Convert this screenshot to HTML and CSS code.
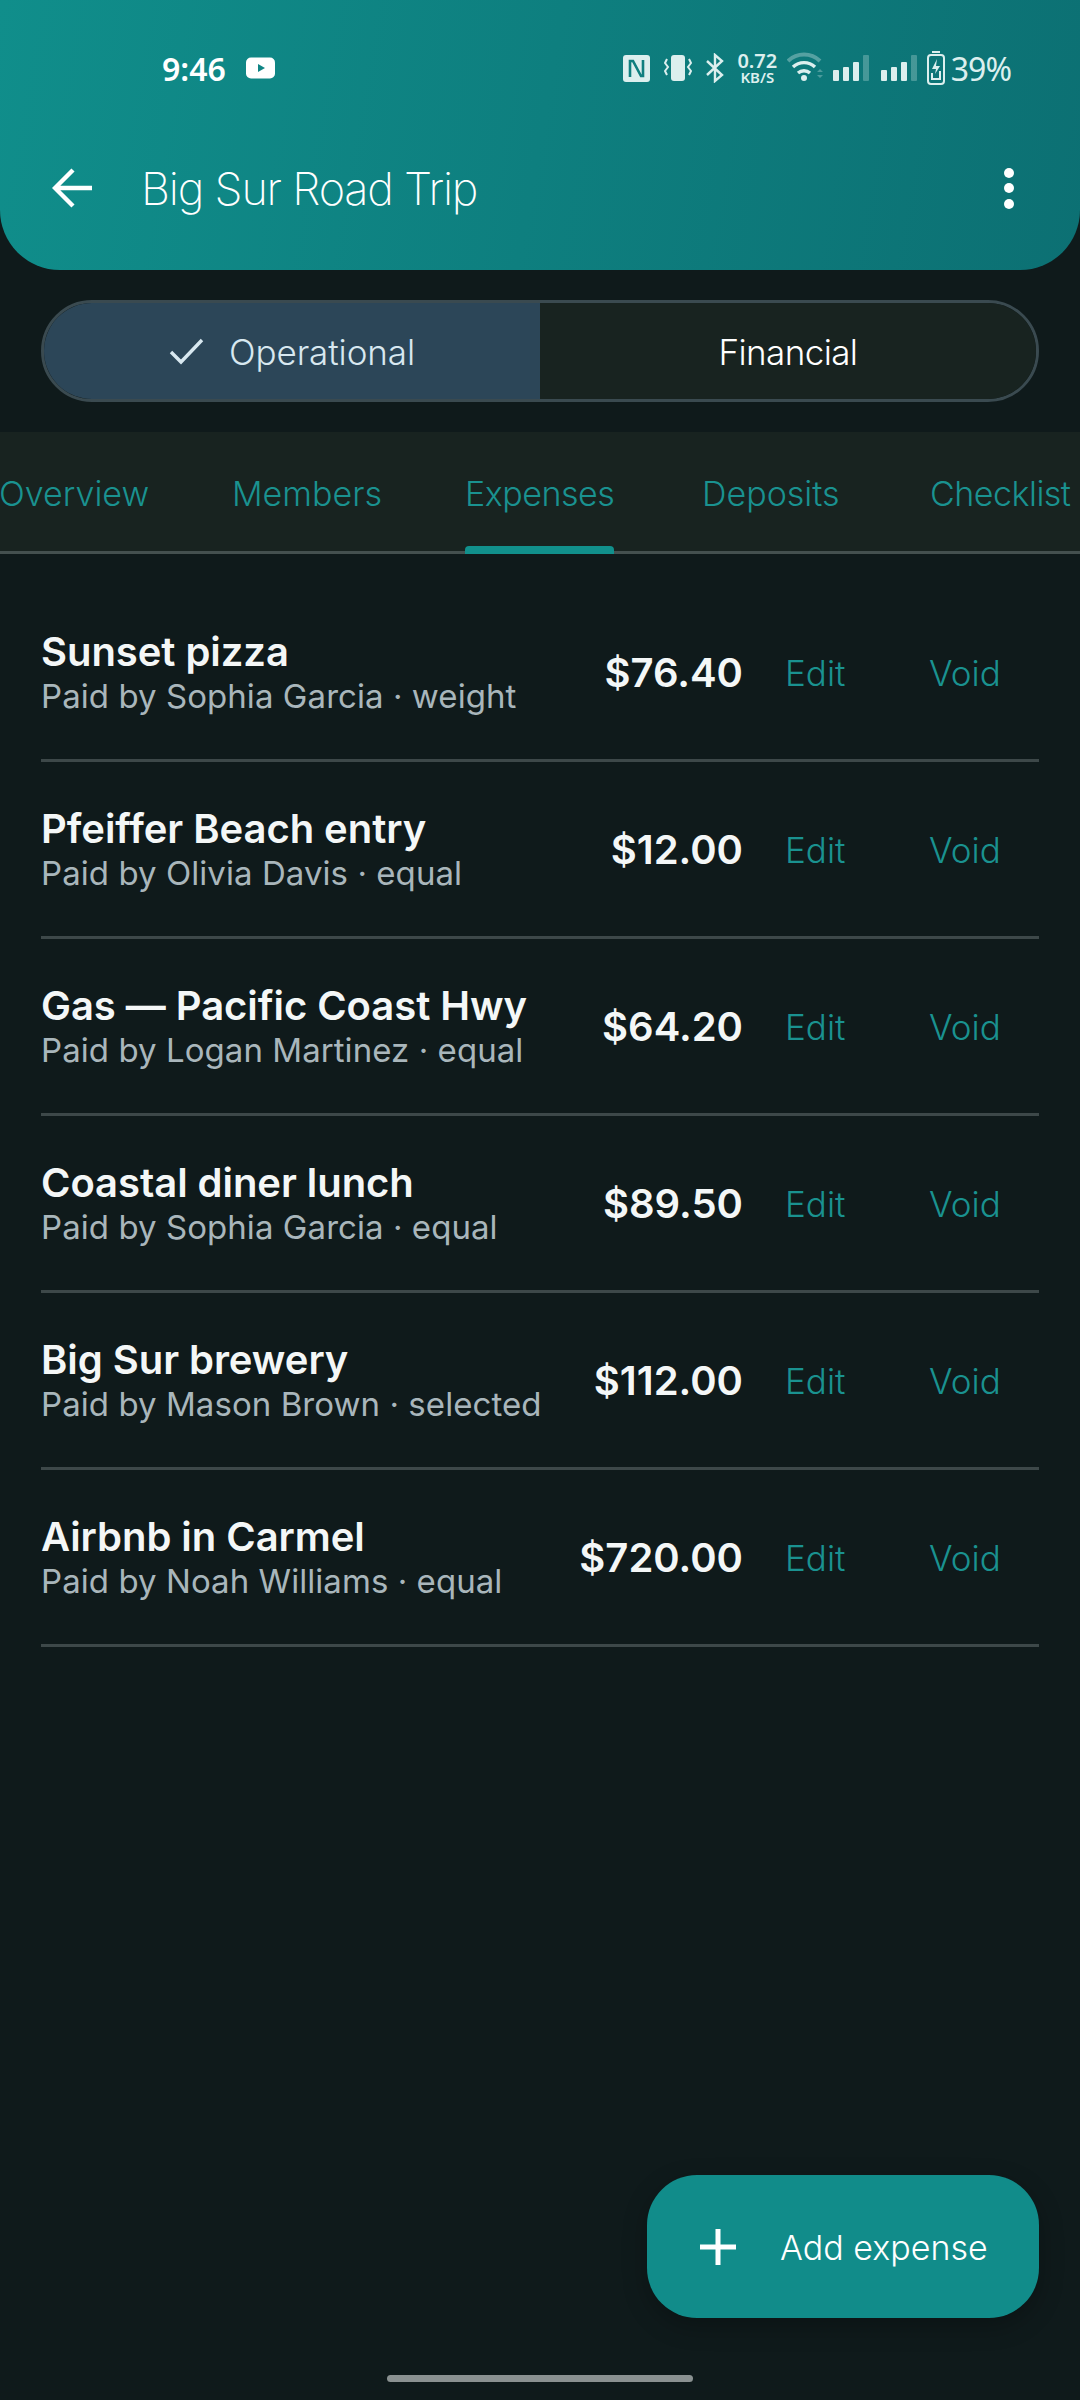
FILE: index.html
```html
<!DOCTYPE html>
<html lang="en">
<head>
    <meta charset="UTF-8">
    <meta name="viewport" content="width=device-width, initial-scale=1.0">
    <title>Big Sur Road Trip</title>
    <link rel="stylesheet" href="styles.css">
</head>
<body>
    <div class="screen">
        <header class="appbar">
            <div class="statusbar">
                <div class="status-left">
                    <span class="clock">9:46</span>
                    <svg class="yt" width="30" height="22" viewBox="0 0 30 22"><rect width="29" height="21" y="0.5" rx="5" fill="#fff"/><path d="M12 7l7 4-7 4z" fill="#0f8585"/></svg>
                </div>
                <div class="status-right">
                    <svg class="ic-nfc" width="27" height="27" viewBox="0 0 27 27"><rect width="27" height="27" rx="3" fill="#dcefee"/><path d="M7 22V6h3l8 15h2V5" fill="none" stroke="#0f7f7f" stroke-width="2.6"/></svg>
                    <svg class="ic-vib" width="28" height="28" viewBox="0 0 28 28"><rect x="7" y="1" width="14" height="26" rx="3" fill="#dcefee"/><path d="M3 5l-2 4 3 4-3 4 2 4M25 5l2 4-3 4 3 4-2 4" fill="none" stroke="#dcefee" stroke-width="2"/></svg>
                    <svg class="ic-bt" width="19" height="30" viewBox="0 0 19 30"><path d="M1 8l15 14-7 6V2l7 6L1 22" fill="none" stroke="#dcefee" stroke-width="2.4"/></svg>
                    <div class="netspeed"><span class="net-num">0.72</span><span class="net-unit">KB/S</span></div>
                    <svg class="ic-wifi" width="37" height="30" viewBox="0 0 37 30"><path d="M1 9a23 23 0 0 1 32 0" fill="none" stroke="#dcefee" stroke-opacity=".35" stroke-width="4"/><path d="M6 15a16 16 0 0 1 22 0M11 21a9 9 0 0 1 12 0" fill="none" stroke="#dcefee" stroke-width="3.4"/><circle cx="17" cy="26" r="3" fill="#dcefee"/><path d="M30 20l3-3 3 3zM30 23l3 3 3-3z" fill="#dcefee" fill-opacity=".3"/></svg>
                    <svg class="ic-sig" width="36" height="26" viewBox="0 0 36 26"><rect x="0" y="15" width="6" height="11" rx="1" fill="#dcefee"/><rect x="10" y="12" width="6" height="14" rx="1" fill="#dcefee"/><rect x="20" y="7" width="6" height="19" rx="1" fill="#dcefee"/><rect x="30" y="0" width="6" height="26" rx="1" fill="#dcefee" fill-opacity=".28"/></svg>
                    <svg class="ic-sig" width="36" height="26" viewBox="0 0 36 26"><rect x="0" y="15" width="6" height="11" rx="1" fill="#dcefee"/><rect x="10" y="12" width="6" height="14" rx="1" fill="#dcefee"/><rect x="20" y="7" width="6" height="19" rx="1" fill="#dcefee"/><rect x="30" y="0" width="6" height="26" rx="1" fill="#dcefee" fill-opacity=".28"/></svg>
                    <svg class="ic-bat" width="18" height="34" viewBox="0 0 18 34"><rect x="5" y="0" width="8" height="2" fill="#dcefee"/><rect x="1" y="4" width="16" height="29" rx="3" fill="none" stroke="#dcefee" stroke-width="2"/><path d="M10 8l-5 10h4l-1 5 5-8H9z" fill="#dcefee"/><path d="M5 22v6h8v-8" fill="none" stroke="#dcefee" stroke-width="2"/></svg>
                    <span class="battery">39%</span>
                </div>
            </div>
            <div class="toolbar">
                <svg class="back" width="40" height="40" viewBox="0 0 40 40"><path d="M21 2L3 20l18 18M3 20h37" fill="none" stroke="#fff" stroke-width="4.4"/></svg>
                <h1 class="title">Big Sur Road Trip</h1>
                <div class="more"><i></i><i></i><i></i></div>
            </div>
        </header>

        <div class="segments">
            <div class="seg seg-on">
                <svg width="36" height="28" viewBox="0 0 36 28"><path d="M2 15l10 10L33 3" fill="none" stroke="#d8e8f0" stroke-width="3.4"/></svg>
                <span>Operational</span>
            </div>
            <div class="seg seg-off"><span>Financial</span></div>
        </div>

        <nav class="tabs">
            <span class="tab tab-overview">Overview</span>
            <span class="tab tab-members">Members</span>
            <span class="tab tab-expenses">Expenses</span>
            <span class="tab tab-deposits">Deposits</span>
            <span class="tab tab-checklist">Checklist</span>
        </nav>

        <main class="list">
            <div class="row">
                <div class="info"><div class="name">Sunset pizza</div><div class="sub">Paid by Sophia Garcia · weight</div></div>
                <div class="amount">$76.40</div><div class="act edit">Edit</div><div class="act void">Void</div>
            </div>
            <div class="row">
                <div class="info"><div class="name">Pfeiffer Beach entry</div><div class="sub">Paid by Olivia Davis · equal</div></div>
                <div class="amount">$12.00</div><div class="act edit">Edit</div><div class="act void">Void</div>
            </div>
            <div class="row">
                <div class="info"><div class="name">Gas — Pacific Coast Hwy</div><div class="sub">Paid by Logan Martinez · equal</div></div>
                <div class="amount">$64.20</div><div class="act edit">Edit</div><div class="act void">Void</div>
            </div>
            <div class="row">
                <div class="info"><div class="name">Coastal diner lunch</div><div class="sub">Paid by Sophia Garcia · equal</div></div>
                <div class="amount">$89.50</div><div class="act edit">Edit</div><div class="act void">Void</div>
            </div>
            <div class="row">
                <div class="info"><div class="name">Big Sur brewery</div><div class="sub">Paid by Mason Brown · selected</div></div>
                <div class="amount">$112.00</div><div class="act edit">Edit</div><div class="act void">Void</div>
            </div>
            <div class="row">
                <div class="info"><div class="name">Airbnb in Carmel</div><div class="sub">Paid by Noah Williams · equal</div></div>
                <div class="amount">$720.00</div><div class="act edit">Edit</div><div class="act void">Void</div>
            </div>
        </main>

        <button class="fab">
            <svg width="36" height="36" viewBox="0 0 36 36"><path d="M18 0v36M0 18h36" stroke="#fff" stroke-width="5"/></svg>
            <span class="fab-label">Add expense</span>
        </button>
        <div class="home-bar"></div>
    </div>
</body>
</html>
```

FILE: styles.css
```css
* {
    box-sizing: border-box;
}
html, body {
    margin: 0;
    padding: 0;
}
body {
    background: #0f1a1b;
    font-family: Inter, "Noto Sans", sans-serif;
}
.screen {
    position: relative;
    width: 1080px;
    height: 2400px;
    overflow: hidden;
    background: #0f1a1b;
}

/* top bar */
.appbar {
    height: 270px;
    background: linear-gradient(100deg, #108e8b, #0c7073);
    border-radius: 0 0 60px 60px;
    color: #fff;
}
.statusbar {
    height: 136px;
    display: flex;
    justify-content: space-between;
    align-items: center;
    padding: 0 69px 0 162px;
}
.status-left {
    display: flex;
    align-items: center;
    gap: 20px;
}
.clock {
    font-family: "Noto Sans", sans-serif;
    font-size: 32px;
    font-weight: 600;
}
.status-right {
    display: flex;
    align-items: center;
    color: #dcefee;
}
.ic-vib { margin-left: 14px; }
.ic-bt { margin-left: 14px; }
.netspeed { margin-left: 12px; }
.ic-wifi { margin-left: 9px; margin-top: -3px; }
.ic-sig { margin-left: 9px; margin-right: 3px; }
.ic-bat { margin-left: 7px; }
.netspeed {
    display: flex;
    flex-direction: column;
    align-items: center;
    width: 41px;
    font-family: "Noto Sans", sans-serif;
    font-weight: 600;
}
.net-num {
    font-size: 20px;
    line-height: 19px;
}
.net-unit {
    font-size: 15px;
    line-height: 15px;
}
.battery {
    font-family: "Noto Sans", sans-serif;
    font-size: 32px;
    letter-spacing: -1px;
    margin-left: 6px;
}
.toolbar {
    height: 104px;
    display: flex;
    align-items: center;
    padding: 0 66px 0 52px;
}
.title {
    flex: 1;
    margin: 0 0 0 49px;
    font-size: 45px;
    font-weight: 200;
    letter-spacing: -1.2px;
}
.more {
    display: flex;
    flex-direction: column;
    gap: 5.5px;
}
.more i {
    display: block;
    width: 10px;
    height: 10px;
    border-radius: 50%;
    background: #fff;
}

/* segmented buttons */
.segments {
    display: flex;
    margin: 30px 41px 0;
    height: 102px;
    border: 3px solid #3a4a50;
    border-radius: 51px;
    overflow: hidden;
}
.seg {
    flex: 1;
    display: flex;
    align-items: center;
    justify-content: center;
    gap: 24px;
    padding-top: 1px;
    font-size: 35px;
    font-weight: 300;
}
.seg svg {
    margin-top: -1px;
}
.seg-on {
    background: #2c4658;
    color: #d8e8f0;
    letter-spacing: -0.1px;
}
.seg-off {
    background: #182320;
    color: #fff;
    letter-spacing: -0.6px;
}

/* tabs */
.tabs {
    position: relative;
    display: flex;
    height: 122px;
    margin-top: 30px;
    background: #182320;
    border-bottom: 3px solid #44504f;
    color: #1a9290;
    font-size: 34px;
    font-weight: 300;
}
.tab {
    position: absolute;
    top: 41px;
}
.tab-overview { left: -1px; }
.tab-members { left: 232px; }
.tab-expenses { left: 465px; letter-spacing: -0.5px; }
.tab-deposits { left: 702px; }
.tab-checklist { left: 930px; letter-spacing: -0.5px; }
.tab-expenses::after {
    content: "";
    position: absolute;
    left: 0;
    right: 0;
    top: 73px;
    height: 8px;
    background: #11908c;
    border-radius: 4px 4px 0 0;
}

/* expense rows */
.list {
    padding: 31px 41px 0;
}
.row {
    display: flex;
    align-items: center;
    height: 177px;
    border-bottom: 3px solid #3d4849;
    padding-top: 2px;
}
.info {
    flex: 1;
    min-width: 0;
}
.name {
    font-size: 40px;
    font-weight: 600;
    line-height: 46px;
    letter-spacing: -0.05px;
    color: #f4f7f7;
}
.sub {
    font-size: 33px;
    line-height: 43px;
    letter-spacing: 0.06px;
    color: #a9b6bb;
}
.amount {
    font-size: 40px;
    font-weight: 600;
    color: #f4f7f7;
    white-space: nowrap;
    margin-bottom: 2px;
}
.act {
    font-size: 35px;
    font-weight: 300;
    color: #1a9290;
}
.edit {
    margin-left: 42px;
    width: 144px;
}
.void {
    width: 70px;
    margin-right: 40px;
}

/* floating button */
.fab {
    position: absolute;
    left: 647px;
    top: 2175px;
    width: 392px;
    height: 143px;
    display: flex;
    align-items: center;
    gap: 44px;
    padding: 0 0 0 53px;
    border: none;
    border-radius: 50px;
    background: #118c8a;
    color: #fff;
    font-family: inherit;
    font-size: 34px;
    font-weight: 300;
    box-shadow: 0 8px 24px rgba(0, 0, 0, 0.25);
}
.fab-label {
    margin-top: 2px;
}
.home-bar {
    position: absolute;
    left: 387px;
    top: 2375px;
    width: 306px;
    height: 7px;
    border-radius: 4px;
    background: #8a9191;
}
```
